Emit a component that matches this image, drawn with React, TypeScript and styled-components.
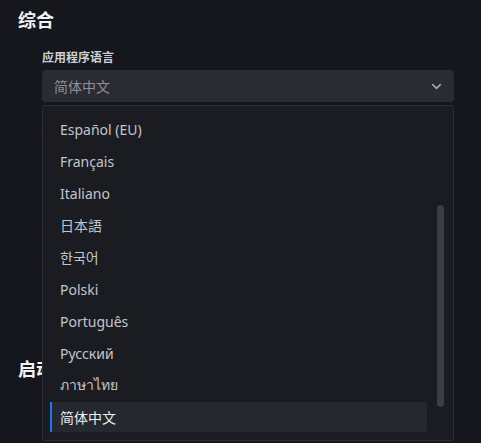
import React, { useLayoutEffect, useRef } from 'react';
import styled, { createGlobalStyle } from 'styled-components';
import { ChevronDown } from 'lucide-react';

const GlobalStyle = createGlobalStyle`
  html, body {
    margin: 0;
    padding: 0;
    background: #15171d;
    overflow: hidden;
  }
  * {
    box-sizing: border-box;
  }
`;

const Page = styled.div`
  height: 443px;
  padding: 8px 18px 0 18px;
  font-family: "Noto Sans", "Noto Sans CJK SC", sans-serif;
  color: #d4d5d8;
  background: #15171d;
  overflow: hidden;
`;

const Section = styled.section<{ $gap?: number }>`
  display: flex;
  flex-direction: column;
  margin-bottom: ${({ $gap }) => $gap ?? 0}px;
`;

const Heading = styled.h2`
  margin: 0 0 17px 0;
  font-size: 18px;
  line-height: 24px;
  font-weight: 700;
  color: #f2f3f5;
`;

const Field = styled.div`
  display: flex;
  flex-direction: column;
  gap: 4px;
  margin-left: 24px;
  width: 412px;
  margin-bottom: 16px;
  position: relative;
`;

const Label = styled.label`
  font-size: 12px;
  line-height: 17px;
  font-weight: 700;
  color: #d0d1d4;
`;

const SelectBox = styled.div`
  height: 32px;
  display: flex;
  align-items: center;
  justify-content: space-between;
  padding: 0 10px 0 12px;
  background: #2b2c32;
  border-radius: 4px;
  font-size: 14px;
  color: #8e9096;
`;

const Chevron = styled.span`
  display: flex;
  color: #a9abb0;
`;

const Dropdown = styled.div`
  position: absolute;
  top: 56px;
  left: 0;
  width: 412px;
  height: 336px;
  background: #1a1c22;
  border: 1px solid #2d2f36;
  border-radius: 3px;
  z-index: 10;
`;

const List = styled.ul`
  list-style: none;
  margin: 0;
  height: 100%;
  padding: 8px 26px 8px 7px;
  overflow: hidden;
`;

const Option = styled.li<{ $active?: boolean }>`
  height: 30px;
  margin-bottom: 2px;
  display: flex;
  align-items: center;
  padding-left: ${({ $active }) => ($active ? 8 : 10)}px;
  border-left: ${({ $active }) => ($active ? '2px solid #1f7ae8' : 'none')};
  border-radius: ${({ $active }) => ($active ? '0 3px 3px 0' : '3px')};
  background: ${({ $active }) => ($active ? '#26282f' : 'transparent')};
  font-size: 14px;
  color: ${({ $active }) => ($active ? '#eceef0' : '#c4c6ca')};
  white-space: nowrap;
`;

const Thumb = styled.div`
  position: absolute;
  right: 9px;
  top: 99px;
  width: 7px;
  height: 202px;
  border-radius: 4px;
  background: #3d3e44;
`;

const Row = styled.div`
  display: flex;
  align-items: center;
  gap: 14px;
  margin-left: 24px;
  margin-top: 50px;
  font-size: 13px;
  color: #6f7177;
`;

const Toggle = styled.span`
  width: 34px;
  height: 18px;
  border-radius: 9px;
  background: #2b2c32;
`;

const languages = [
  'Български',
  'Čeština',
  'English',
  'Español',
  'Deutsch',
  'Español (EU)',
  'Français',
  'Italiano',
  '日本語',
  '한국어',
  'Polski',
  'Português',
  'Русский',
  'ภาษาไทย',
  '简体中文',
  '繁體中文',
  'Türkçe',
];

const current = '简体中文';

export default function App() {
  const listRef = useRef<HTMLUListElement>(null);

  useLayoutEffect(() => {
    if (listRef.current) listRef.current.scrollTop = 160;
  }, []);

  return (
    <Page>
      <GlobalStyle />
      <Section $gap={32}>
        <Heading>综合</Heading>
        <Field>
          <Label>应用程序语言</Label>
          <SelectBox>
            <span>{current}</span>
            <Chevron>
              <ChevronDown size={15} strokeWidth={2.4} />
            </Chevron>
          </SelectBox>
          <Dropdown>
            <List ref={listRef}>
              {languages.map((lang) => (
                <Option key={lang} $active={lang === current}>
                  {lang}
                </Option>
              ))}
            </List>
            <Thumb />
          </Dropdown>
        </Field>
        <Field>
          <Label>主题</Label>
          <SelectBox>深色</SelectBox>
        </Field>
        <Field>
          <Label>界面缩放</Label>
          <SelectBox>100%</SelectBox>
        </Field>
        <Field>
          <Label>字体</Label>
          <SelectBox>默认</SelectBox>
        </Field>
      </Section>
      <Section>
        <Heading>启动</Heading>
        <Row>
          <Toggle />
          <span>开机时自动启动应用程序并最小化到托盘</span>
        </Row>
      </Section>
    </Page>
  );
}
